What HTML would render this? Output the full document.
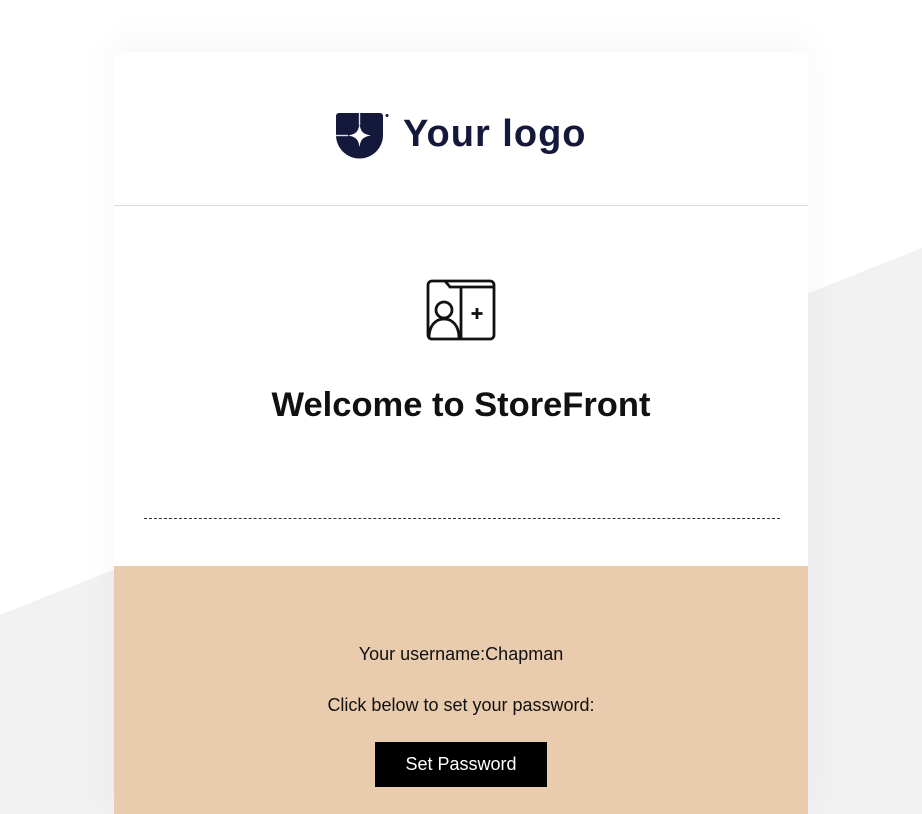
<!DOCTYPE html>
<html><head><meta charset="utf-8"><style>
html,body{margin:0;width:922px;height:814px;overflow:hidden}
body{background:#fff;font-family:"Liberation Sans",Arial,sans-serif;position:relative}
.bg{position:absolute;left:0;top:0;display:block}
.card{position:absolute;left:114px;top:52px;width:694px;height:762px;background:#fff;border-radius:10px 10px 0 0;overflow:hidden;box-shadow:0 -10px 40px rgba(0,0,0,0.04)}
.hdr{height:153px;border-bottom:1px solid #dcdcdc;position:relative}
.tan{position:absolute;left:0;top:514px;width:694px;height:248px;background:#e9cbad;text-align:center;color:#111;font-size:18px}
</style></head><body>
<svg class="bg" width="922" height="814"><polygon points="0,615 922,248 922,814 0,814" fill="#f1f1f2"/></svg>
<div class="card">
 <div class="hdr">
  <svg style="position:absolute;left:222px;top:61px" width="54" height="46" viewBox="0 0 54 46">
   <path d="M3 0 H44 A3 3 0 0 1 47 3 V22 A23.5 23.5 0 0 1 0 22 V3 A3 3 0 0 1 3 0 Z" fill="#14183a"/>
   <path d="M23.5 11 C24.8 19 27 21 35 22.5 C27 24 24.8 26 23.5 34 C22.2 26 20 24 12 22.5 C20 21 22.2 19 23.5 11Z" fill="#fff"/>
   <rect x="22.8" y="0" width="1.4" height="12" fill="#dfe0e8"/>
   <rect x="0" y="21.8" width="12" height="1.4" fill="#dfe0e8"/>
   <circle cx="51" cy="2.5" r="1.5" fill="#14183a"/>
  </svg>
  <div style="position:absolute;left:289px;top:61px;font-size:38px;font-weight:bold;color:#14183a;letter-spacing:1px">Your logo</div>
 </div>
 <svg style="position:absolute;left:312px;top:227px" width="70" height="62" viewBox="0 0 70 62" fill="none" stroke="#111" stroke-width="2.8">
  <rect x="2" y="2" width="66" height="58" rx="4"/>
  <path d="M19 2 L24 8 H68"/>
  <line x1="35" y1="8" x2="35" y2="60"/>
  <circle cx="18" cy="31" r="8"/>
  <path d="M3 59 C3 46 10 40 18 40 C26 40 33 46 33 59"/>
  <path d="M51 29 V40 M45.5 34.5 H56.5"/>
 </svg>
 <div style="position:absolute;left:0;width:694px;top:334px;text-align:center;font-size:34.5px;font-weight:bold;color:#111">Welcome to StoreFront</div>
 <div style="position:absolute;left:30px;width:636px;top:466px;border-top:1px dashed #333"></div>
 <div class="tan">
  <div style="position:absolute;left:0;width:694px;top:78px">Your username:Chapman</div>
  <div style="position:absolute;left:0;width:694px;top:129px">Click below to set your password:</div>
  <div style="position:absolute;left:261px;top:176px;width:172px;height:45px;background:#000;color:#fff;line-height:45px">Set Password</div>
 </div>
</div>
</body></html>
